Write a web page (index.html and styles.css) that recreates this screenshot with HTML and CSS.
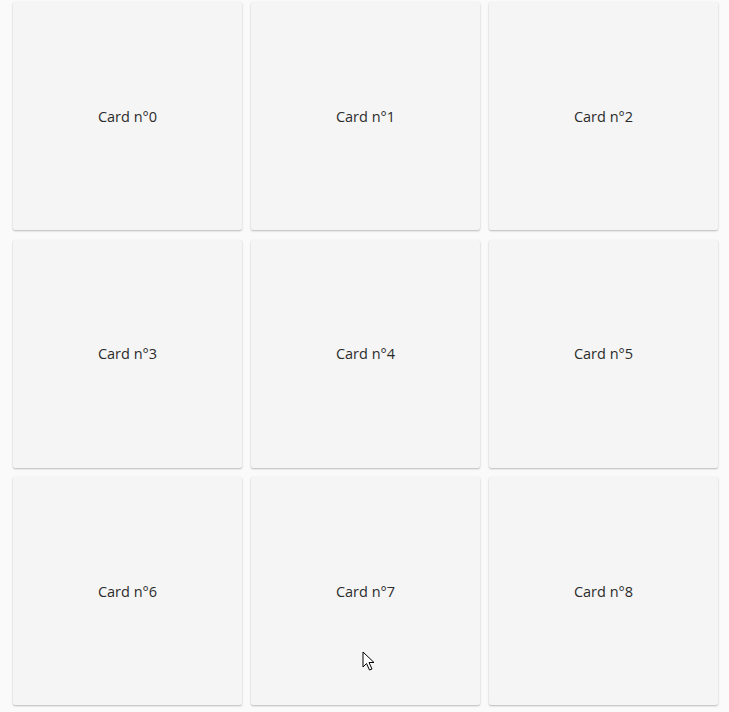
FILE: index.html
```html
<!DOCTYPE html>
<html>
<head>
<meta charset="utf-8">
<link rel="stylesheet" href="styles.css">
</head>
<body>
<div class="grid">
  <div class="card">Card n°0</div>
  <div class="card">Card n°1</div>
  <div class="card">Card n°2</div>
  <div class="card">Card n°3</div>
  <div class="card">Card n°4</div>
  <div class="card">Card n°5</div>
  <div class="card">Card n°6</div>
  <div class="card">Card n°7</div>
  <div class="card">Card n°8</div>
</div>
<svg class="cursor" width="14" height="22" viewBox="0 0 14 22">
  <path d="M1 1 L1 16 L4.5 12.5 L7.5 19 L10 18 L7 11.5 L12 11.5 Z" fill="#fff" stroke="#000" stroke-width="1" stroke-linejoin="miter"/>
</svg>
</body>
</html>
```
FILE: styles.css
```css
html, body {
  margin: 0;
  padding: 0;
  background: #fafafa;
  overflow: hidden;
}
body {
  font-family: "Open Sans", "Noto Sans", sans-serif;
  position: relative;
  height: 712px;
}
.grid {
  display: grid;
  grid-template-columns: repeat(3, 229px);
  grid-auto-rows: 228px;
  column-gap: 9px;
  row-gap: 9.5px;
  padding: 2px 0 0 13px;
}
.card {
  background: #f5f5f5;
  border-radius: 2px;
  box-shadow: 0 1px 2px rgba(0,0,0,0.26), 0 0 1px rgba(0,0,0,0.05);
  display: flex;
  align-items: center;
  justify-content: center;
  font-size: 14.5px;
  color: #2b2b2b;
}
.cursor {
  position: absolute;
  left: 362px;
  top: 651px;
}
```
